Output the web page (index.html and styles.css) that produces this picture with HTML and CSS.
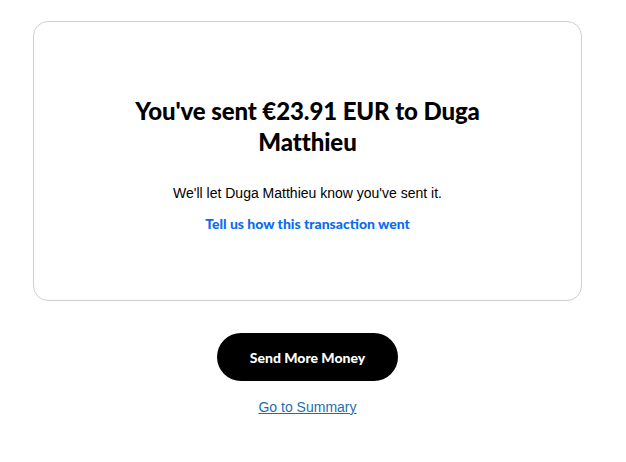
FILE: index.html
```html
<!DOCTYPE html>
<html>
<head>
<meta charset="utf-8">
<link rel="stylesheet" href="styles.css">
</head>
<body>
<main class="page">
  <section class="card">
    <h1 class="title">You've sent €23.91 EUR to Duga Matthieu</h1>
    <p class="note">We'll let Duga Matthieu know you've sent it.</p>
    <a class="feedback" href="#">Tell us how this transaction went</a>
  </section>
  <div class="actions">
    <a class="btn" href="#">Send More Money</a>
    <a class="summary" href="#">Go to Summary</a>
  </div>
</main>
</body>
</html>
```
FILE: styles.css
```css
html, body {
  margin: 0;
  padding: 0;
  background: #fff;
}
.page {
  padding: 21px 44px 0 33px;
  font-family: "Liberation Sans", Arial, sans-serif;
  color: #000;
}
.card {
  box-sizing: border-box;
  height: 280px;
  border: 1px solid #cfcfcf;
  border-radius: 15px;
  display: flex;
  flex-direction: column;
  align-items: center;
  padding-top: 73px;
}
.title {
  margin: 0;
  width: 370px;
  text-align: center;
  font-family: Lato, sans-serif;
  font-weight: 900;
  font-size: 24px;
  line-height: 31px;
  letter-spacing: -0.1px;
}
.note {
  margin: 27px 0 0;
  font-size: 14px;
  line-height: 18px;
}
.feedback {
  margin-top: 13px;
  font-family: Lato, sans-serif;
  font-weight: 900;
  font-size: 14px;
  line-height: 18px;
  color: #0a6cf0;
  text-decoration: none;
}
.actions {
  display: flex;
  flex-direction: column;
  align-items: center;
  padding-top: 32px;
}
.btn {
  width: 181px;
  height: 48px;
  border-radius: 24px;
  background: #000;
  color: #fff;
  display: flex;
  align-items: center;
  justify-content: center;
  font-family: Lato, sans-serif;
  font-weight: 900;
  font-size: 14px;
  text-decoration: none;
}
.summary {
  margin-top: 17px;
  font-size: 14px;
  line-height: 18px;
  color: #1f6fae;
  text-decoration: underline;
}
```
